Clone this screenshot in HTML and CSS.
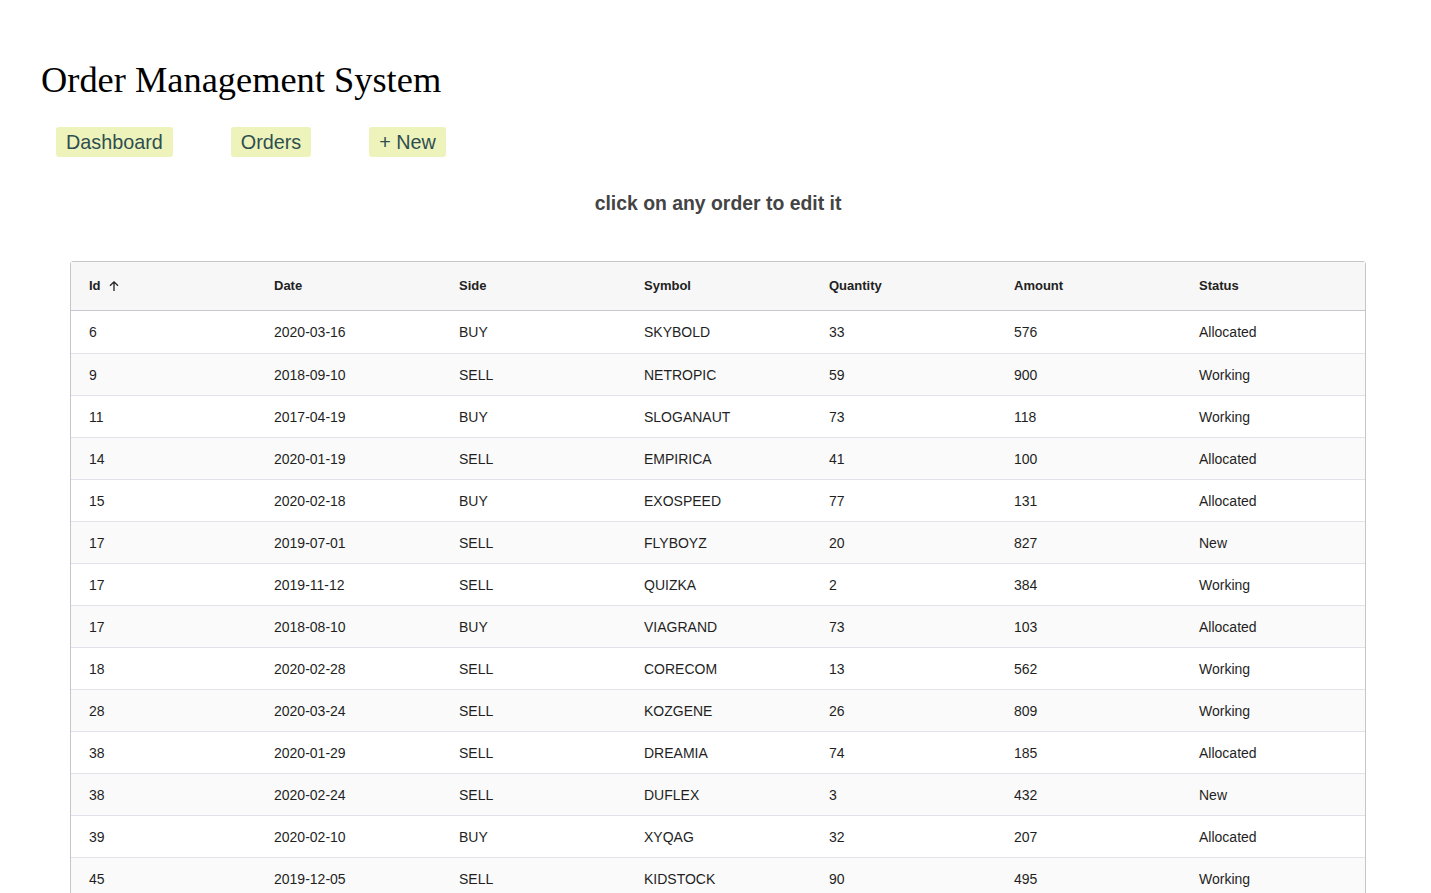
FILE: index.html
```html
<!DOCTYPE html>
<html>
<head>
<meta charset="utf-8">
<link rel="stylesheet" href="styles.css">
</head>
<body>
<div class="page">
  <h1 class="title">Order Management System</h1>
  <nav class="nav">
    <a class="nav-btn">Dashboard</a>
    <a class="nav-btn">Orders</a>
    <a class="nav-btn">+ New</a>
  </nav>
  <p class="hint">click on any order to edit it</p>
  <div class="grid">
    <div class="row head">
      <div class="cell">Id <svg class="sort" width="12" height="12" viewBox="0 0 12 12"><path d="M6 11V2M2 5.8 6 1.8l4 4" fill="none" stroke="#222" stroke-width="1.3"/></svg></div>
      <div class="cell">Date</div>
      <div class="cell">Side</div>
      <div class="cell">Symbol</div>
      <div class="cell">Quantity</div>
      <div class="cell">Amount</div>
      <div class="cell">Status</div>
    </div>
    <div class="row"><div class="cell">6</div><div class="cell">2020-03-16</div><div class="cell">BUY</div><div class="cell">SKYBOLD</div><div class="cell">33</div><div class="cell">576</div><div class="cell">Allocated</div></div>
    <div class="row"><div class="cell">9</div><div class="cell">2018-09-10</div><div class="cell">SELL</div><div class="cell">NETROPIC</div><div class="cell">59</div><div class="cell">900</div><div class="cell">Working</div></div>
    <div class="row"><div class="cell">11</div><div class="cell">2017-04-19</div><div class="cell">BUY</div><div class="cell">SLOGANAUT</div><div class="cell">73</div><div class="cell">118</div><div class="cell">Working</div></div>
    <div class="row"><div class="cell">14</div><div class="cell">2020-01-19</div><div class="cell">SELL</div><div class="cell">EMPIRICA</div><div class="cell">41</div><div class="cell">100</div><div class="cell">Allocated</div></div>
    <div class="row"><div class="cell">15</div><div class="cell">2020-02-18</div><div class="cell">BUY</div><div class="cell">EXOSPEED</div><div class="cell">77</div><div class="cell">131</div><div class="cell">Allocated</div></div>
    <div class="row"><div class="cell">17</div><div class="cell">2019-07-01</div><div class="cell">SELL</div><div class="cell">FLYBOYZ</div><div class="cell">20</div><div class="cell">827</div><div class="cell">New</div></div>
    <div class="row"><div class="cell">17</div><div class="cell">2019-11-12</div><div class="cell">SELL</div><div class="cell">QUIZKA</div><div class="cell">2</div><div class="cell">384</div><div class="cell">Working</div></div>
    <div class="row"><div class="cell">17</div><div class="cell">2018-08-10</div><div class="cell">BUY</div><div class="cell">VIAGRAND</div><div class="cell">73</div><div class="cell">103</div><div class="cell">Allocated</div></div>
    <div class="row"><div class="cell">18</div><div class="cell">2020-02-28</div><div class="cell">SELL</div><div class="cell">CORECOM</div><div class="cell">13</div><div class="cell">562</div><div class="cell">Working</div></div>
    <div class="row"><div class="cell">28</div><div class="cell">2020-03-24</div><div class="cell">SELL</div><div class="cell">KOZGENE</div><div class="cell">26</div><div class="cell">809</div><div class="cell">Working</div></div>
    <div class="row"><div class="cell">38</div><div class="cell">2020-01-29</div><div class="cell">SELL</div><div class="cell">DREAMIA</div><div class="cell">74</div><div class="cell">185</div><div class="cell">Allocated</div></div>
    <div class="row"><div class="cell">38</div><div class="cell">2020-02-24</div><div class="cell">SELL</div><div class="cell">DUFLEX</div><div class="cell">3</div><div class="cell">432</div><div class="cell">New</div></div>
    <div class="row"><div class="cell">39</div><div class="cell">2020-02-10</div><div class="cell">BUY</div><div class="cell">XYQAG</div><div class="cell">32</div><div class="cell">207</div><div class="cell">Allocated</div></div>
    <div class="row"><div class="cell">45</div><div class="cell">2019-12-05</div><div class="cell">SELL</div><div class="cell">KIDSTOCK</div><div class="cell">90</div><div class="cell">495</div><div class="cell">Working</div></div>
  </div>
</div>
</body>
</html>
```

FILE: styles.css
```css
html, body {
  margin: 0;
  padding: 0;
  background: #ffffff;
}

.page {
  padding: 60px 65px 0 41px;
}

.title {
  margin: 0;
  font-family: "Liberation Serif", "Times New Roman", serif;
  font-size: 36.4px;
  font-weight: normal;
  line-height: 41px;
  color: #000;
}

.nav {
  display: flex;
  gap: 58px;
  margin: 26px 0 0 15px;
}

.nav-btn {
  display: inline-block;
  height: 30px;
  line-height: 30px;
  padding: 0 10px;
  background: #eef3bc;
  color: #2f4f4f;
  border-radius: 3px;
  font-family: "Liberation Sans", Arial, sans-serif;
  font-size: 19.8px;
}

.hint {
  margin: 34px 0 0 0;
  padding-left: 29px;
  text-align: center;
  font-family: "Liberation Sans", Arial, sans-serif;
  font-size: 19.4px;
  font-weight: bold;
  color: #444;
  line-height: 24px;
}

.grid {
  margin: 46px 0 0 29px;
  width: 1296px;
  border: 1px solid #c6c6c6;
  border-radius: 3px;
  box-sizing: border-box;
  font-family: "Liberation Sans", Arial, sans-serif;
  color: #1f1f1f;
}

.row {
  display: grid;
  grid-template-columns: repeat(7, 185px);
  height: 42px;
  box-sizing: border-box;
  border-bottom: 1px solid #e2e1ec;
  font-size: 14px;
}

.row:nth-child(odd) {
  background: #fafafa;
}

.row.head {
  height: 49px;
  background: #f7f7f7;
  border-bottom: 1px solid #c7c6d2;
  font-size: 13px;
  font-weight: bold;
  color: #222;
  padding-bottom: 1px;
}

.row:nth-child(2) {
  height: 43px;
}

.cell {
  display: flex;
  align-items: center;
  padding-left: 18px;
}

.sort {
  margin-left: 7px;
}
```
